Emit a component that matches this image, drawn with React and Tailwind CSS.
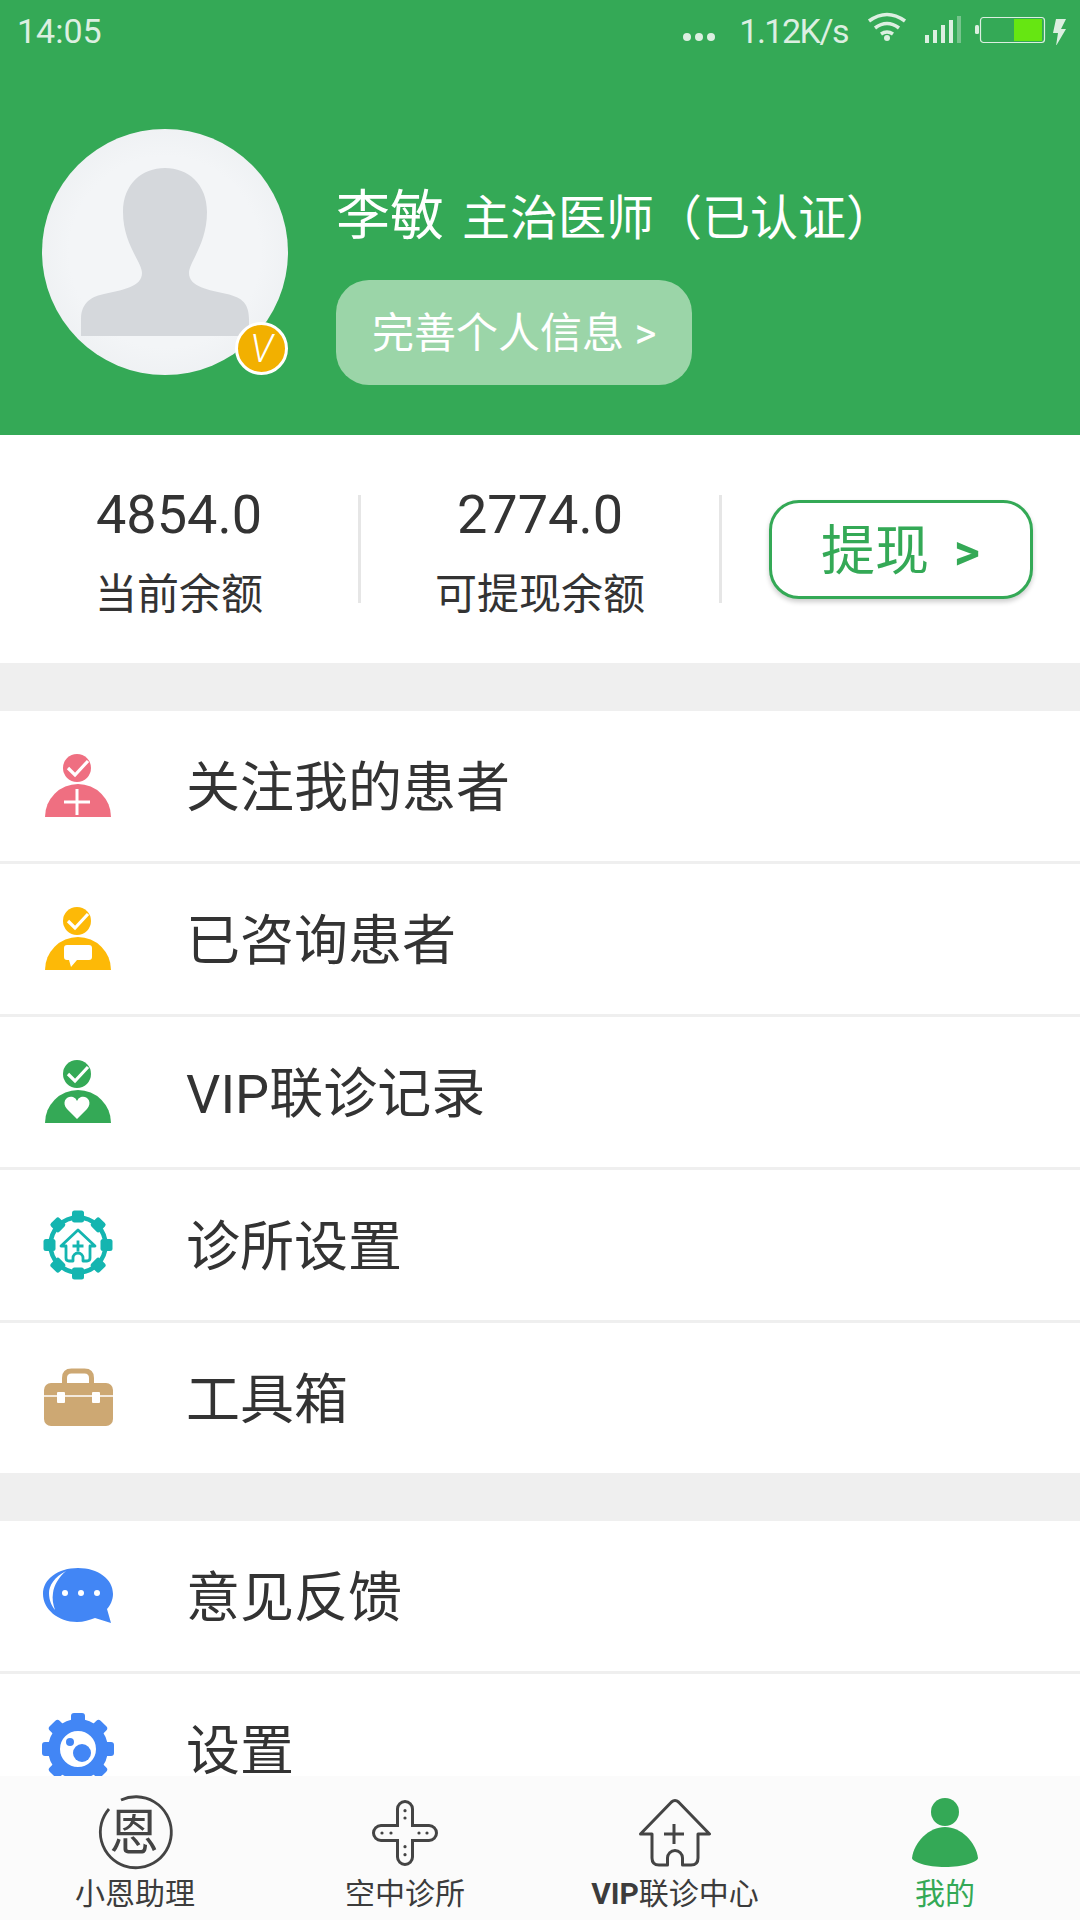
import React from 'react';

const Check = () => (
    <path d="M27 18l7 7 13-14" fill="none" stroke="#fff" strokeWidth="3.2" />
);

const PatientIcon = ({ color, children }) => (
    <svg width="72" height="72" viewBox="0 0 72 72" className="shrink-0">
        <circle cx="36" cy="18" r="14" fill={color} />
        <Check />
        <path d="M4 67a33 33 0 0 1 66 0z" fill={color} />
        {children}
    </svg>
);

const gearTeeth = [0, 45, 90, 135, 180, 225, 270, 315];

const ClinicIcon = () => (
    <svg width="72" height="72" viewBox="0 0 72 72" className="shrink-0">
        <g transform="translate(1 0)">
            {gearTeeth.map((a) => (
                <rect key={a} x="30" y="1.500" width="12" height="12" rx="2.5" fill="#14b5b0" transform={`rotate(${a} 36 36)`} />
            ))}
            <circle cx="36" cy="36" r="27.500" fill="none" stroke="#14b5b0" strokeWidth="4.500" />
            <path d="M19 37L36 21l17 16h-5v12q0 3-3 3h-4v-3a5 5 0 0 0-10 0v3h-4q-3 0-3-3V37z" fill="none" stroke="#14b5b0" strokeWidth="2.8" strokeLinejoin="round" />
            <path d="M30.500 37h11M36 31.500v11" stroke="#14b5b0" strokeWidth="2.8" />
        </g>
    </svg>
);

const ToolboxIcon = () => (
    <svg width="72" height="72" viewBox="0 0 72 72" className="shrink-0">
        <path d="M23.5 22v-6q0-7 7-7h13q7 0 7 7v6" fill="none" stroke="#cda873" strokeWidth="5" />
        <rect x="3" y="21" width="69" height="43" rx="7" fill="#cda873" />
        <path d="M3 34h69" stroke="#fff" strokeWidth="1.6" />
        <rect x="16" y="30" width="8" height="11" rx="1" fill="#fff" />
        <rect x="51" y="30" width="8" height="11" rx="1" fill="#fff" />
    </svg>
);

const ChatIcon = () => (
    <svg width="72" height="72" viewBox="0 0 72 72" className="shrink-0">
        <path d="M37 8c20 0 35 11 35 26 0 6-3 12-6 15l4 14-16-5c-6 2-11 4-18 4C17 62 2 49 2 34 2 19 17 8 37 8z" fill="#4286f5" />
        <path d="M25 11C13 17 8 26 8 33c0 8 3 13 6 17-2-6-3-11-2-17 1-8 6-16 13-22z" fill="#fff" />
        <circle cx="24" cy="33" r="3" fill="#fff" />
        <circle cx="40" cy="33" r="3" fill="#fff" />
        <circle cx="56" cy="33" r="3" fill="#fff" />
    </svg>
);

const SettingIcon = () => (
    <svg width="76" height="76" viewBox="0 0 76 76" className="shrink-0 ml-[2px]">
        {gearTeeth.map((a) => (
            <rect key={a} x="31" y="2" width="14" height="14" rx="3" fill="#4286f5" transform={`rotate(${a} 38 38)`} />
        ))}
        <circle cx="38" cy="38" r="24" fill="none" stroke="#4286f5" strokeWidth="12" />
        <circle cx="42" cy="42" r="9" fill="#4286f5" />
        <circle cx="30" cy="31" r="4" fill="#4286f5" />
    </svg>
);

const group1 = [
    {
        label: '关注我的患者',
        icon: (
            <PatientIcon color="#ef6f81">
                <path d="M23 52h26M36 39v26" stroke="#fff" strokeWidth="3" />
            </PatientIcon>
        ),
    },
    {
        label: '已咨询患者',
        icon: (
            <PatientIcon color="#fdb907">
                <path d="M26 42h22q3 0 3 3v9q0 3-3 3H36l-6 7-2-7h-2q-3 0-3-3v-9q0-3 3-3z" fill="#fff" />
            </PatientIcon>
        ),
    },
    {
        label: 'VIP联诊记录',
        icon: (
            <PatientIcon color="#34a956">
                <path d="M36 63L26 53c-6-7 0-14 6-12q3 1 4 4 1-3 4-4c6-2 12 5 6 12z" fill="#fff" />
            </PatientIcon>
        ),
    },
    { label: '诊所设置', icon: <ClinicIcon /> },
    { label: '工具箱', icon: <ToolboxIcon /> },
];

const group2 = [
    { label: '意见反馈', icon: <ChatIcon /> },
    { label: '设置', icon: <SettingIcon /> },
];

const MenuRow = ({ item, last }) => (
    <div className={`flex items-center pl-[41px] bg-white ${last ? 'h-[150px]' : 'h-[153px] border-b-[3px] border-[#efefef]'}`}>
        <div className="w-[72px] h-[72px] flex items-center justify-center shrink-0">{item.icon}</div>
        <span className="ml-[73px] mt-[6px] text-[54px] text-[#333] leading-[46px]">{item.label}</span>
    </div>
);

const StatusBar = () => (
    <div className="h-[60px] flex items-center pl-[17px] pr-[12px] text-[34px] text-[#dcefe1]">
        <span className="mt-[2px]">14:05</span>
        <div className="ml-auto flex items-center">
            <svg width="36" height="12" viewBox="0 0 36 12" className="mt-[14px]">
                <circle cx="5" cy="6" r="4" fill="#dcefe1" />
                <circle cx="17" cy="6" r="4" fill="#dcefe1" />
                <circle cx="29" cy="6" r="4" fill="#dcefe1" />
            </svg>
            <span className="ml-[21px] mt-[2px] tracking-[-1.500px]">1.12K/s</span>
            <svg width="40" height="30" viewBox="0 0 40 30" className="ml-[19px] -mt-[6px]">
                <path d="M2 9Q20-4 38 9M8 16q12-9 24 0M14 22q6-4 12 0" fill="none" stroke="#dcefe1" strokeWidth="3.6" />
                <circle cx="20" cy="26" r="3" fill="#dcefe1" />
            </svg>
            <svg width="37" height="28" viewBox="0 0 37 28" className="ml-[18px]">
                <rect x="0" y="19" width="4" height="8" fill="#dcefe1" />
                <rect x="8" y="14" width="4" height="13" fill="#dcefe1" />
                <rect x="16" y="9" width="4" height="18" fill="#dcefe1" />
                <rect x="24" y="4" width="4" height="23" fill="#dcefe1" />
                <rect x="32" y="0" width="4" height="27" fill="#dcefe1" fillOpacity="0.4" />
            </svg>
            <svg width="93" height="30" viewBox="0 0 93 30" className="ml-[13px]">
                <rect x="0" y="10" width="4" height="9" rx="1.5" fill="#dcefe1" />
                <rect x="5.5" y="2.5" width="64" height="25" rx="3" fill="none" stroke="#dcefe1" strokeWidth="1.2" />
                <rect x="39" y="4" width="28" height="22" fill="#66e612" />
                <path d="M81 4h10l-5 10h5l-10 17 2-13h-5z" fill="#dcefe1" />
            </svg>
        </div>
    </div>
);

const Avatar = () => (
    <div className="relative w-[246px] h-[246px] shrink-0 rounded-full bg-[radial-gradient(circle,#f3f5f7_55%,#e8ebee_100%)]">
        <svg width="246" height="246" viewBox="0 0 246 246">
            <path d="M39 207V190C39 172 52 167 62 165C80 161 100 158 100 144C100 133 81 115 81 83C81 55 100 39 123 39C146 39 165 55 165 83C165 115 147 133 147 144C147 158 167 161 185 165C197 168 207 172 207 190V207Z" fill="#d5d8dc" />
        </svg>
        <div className="absolute right-0 bottom-0 w-[53px] h-[53px] rounded-full bg-[#f2b000] border-[3px] border-white flex items-center justify-center text-white text-[38px] font-light italic leading-none">
            V
        </div>
    </div>
);

const Header = () => (
    <div className="h-[435px] bg-[#34a956] shrink-0">
        <StatusBar />
        <div className="flex gap-[48px] pl-[42px] pt-[69px]">
            <Avatar />
            <div className="mt-[55px]">
                <div className="h-[60px] flex items-center text-white">
                    <span className="text-[54px] leading-none mt-[6px]">李敏</span>
                    <span className="ml-[18px] text-[48px] leading-none mt-[10px]">主治医师（已认证）</span>
                </div>
                <div className="mt-[36px] w-[356px] h-[105px] rounded-[33px] bg-[#9bd5a8] flex items-center pl-[36px] pt-[2px] text-[42px] text-white">
                    完善个人信息 &gt;
                </div>
            </div>
        </div>
    </div>
);

const Stat = ({ value, label }) => (
    <div className="h-[108px] border-r-[3px] border-[#e6e6e6] flex flex-col items-center text-[#333]">
        <span className="text-[54px] leading-none -mt-[7px]">{value}</span>
        <span className="text-[42px] leading-none mt-[32px]">{label}</span>
    </div>
);

const Stats = () => (
    <div className="h-[228px] bg-white grid grid-cols-[361px_361px_1fr] items-center shrink-0">
        <Stat value="4854.0" label="当前余额" />
        <Stat value="2774.0" label="可提现余额" />
        <div className="flex justify-center">
            <div className="w-[264px] h-[99px] rounded-[30px] border-[3px] border-[#34a956] bg-white shadow-[0_3px_5px_rgba(0,0,0,0.2)] flex items-center pl-[49px] pt-[5px] text-[#34a956]">
                <span className="text-[54px] leading-none">提现</span>
                <span className="ml-[25px] text-[50px] font-bold leading-none">&gt;</span>
            </div>
        </div>
    </div>
);

const EnIcon = () => (
    <svg width="80" height="72" viewBox="0 0 80 72" className="overflow-visible -ml-[2px]">
        <path d="M27 2A35.500 35.500 0 1 1 15 11" fill="none" stroke="#444" strokeWidth="2.8" />
        <text x="40" y="52" textAnchor="middle" fontSize="50" fill="#444" fontFamily="Noto Sans CJK SC">恩</text>
    </svg>
);

const ClinicTabIcon = () => (
    <svg width="80" height="72" viewBox="0 0 80 72">
        <path d="M32.500 11a7.500 7.500 0 0 1 15 0v16.500H64a7.500 7.500 0 0 1 0 15H47.500V59a7.500 7.500 0 0 1-15 0V42.500H16a7.500 7.500 0 0 1 0-15h16.500z" fill="none" stroke="#444" strokeWidth="3" />
        {[[40, 12.7], [40, 20], [40, 48.7], [40, 56.7], [17, 35], [26, 35], [54, 35], [62, 35]].map(([x, y]) => (
            <circle key={`${x}-${y}`} cx={x} cy={y} r="1.6" fill="#444" />
        ))}
    </svg>
);

const HouseTabIcon = () => (
    <svg width="80" height="72" viewBox="0 0 80 72">
        <path d="M5.500 36L36.500 4q3.500-3 7 0L74.500 36H63v24q0 7-7 7H47.500v-7a7.500 7.500 0 0 0-15 0v7H24q-7 0-7-7V36z" fill="none" stroke="#444" strokeWidth="3" strokeLinejoin="round" />
        <path d="M29 36h20M39 26v20" stroke="#444" strokeWidth="3" />
    </svg>
);

const MeTabIcon = () => (
    <svg width="80" height="72" viewBox="0 0 80 72">
        <circle cx="40" cy="14" r="14" fill="#34a956" />
        <path d="M7 60C9 44 24 29 40 29s31 15 33 31c0 4-15 9-33 9S7 64 7 60z" fill="#34a956" />
    </svg>
);

const tabs = [
    { label: '小恩助理', icon: <EnIcon /> },
    { label: '空中诊所', icon: <ClinicTabIcon /> },
    { label: <><b className="font-bold">VIP</b>联诊中心</>, icon: <HouseTabIcon /> },
    { label: '我的', icon: <MeTabIcon />, active: true },
];

const TabBar = () => (
    <div className="h-[144px] shrink-0 bg-[#fbfbfb] grid grid-cols-4 pt-[22px]">
        {tabs.map((tab, i) => (
            <div key={i} className={`flex flex-col items-center ${tab.active ? 'text-[#34a956]' : 'text-[#3c3c3c]'}`}>
                {tab.icon}
                <span className="text-[30px] leading-none mt-[9px]">{tab.label}</span>
            </div>
        ))}
    </div>
);

const App = () => {
    return (
        <div className="w-[1080px] h-[1920px] flex flex-col overflow-hidden bg-white font-['Roboto','Noto_Sans_CJK_SC',sans-serif]">
            <Header />
            <Stats />
            <div className="flex-1 min-h-0 overflow-hidden">
                <div className="h-[48px] bg-[#efefef]"></div>
                {group1.map((item, i) => (
                    <MenuRow key={i} item={item} last={i === group1.length - 1} />
                ))}
                <div className="h-[48px] bg-[#efefef]"></div>
                {group2.map((item, i) => (
                    <MenuRow key={i} item={item} last={i === group2.length - 1} />
                ))}
            </div>
            <TabBar />
        </div>
    );
};

export default App;
